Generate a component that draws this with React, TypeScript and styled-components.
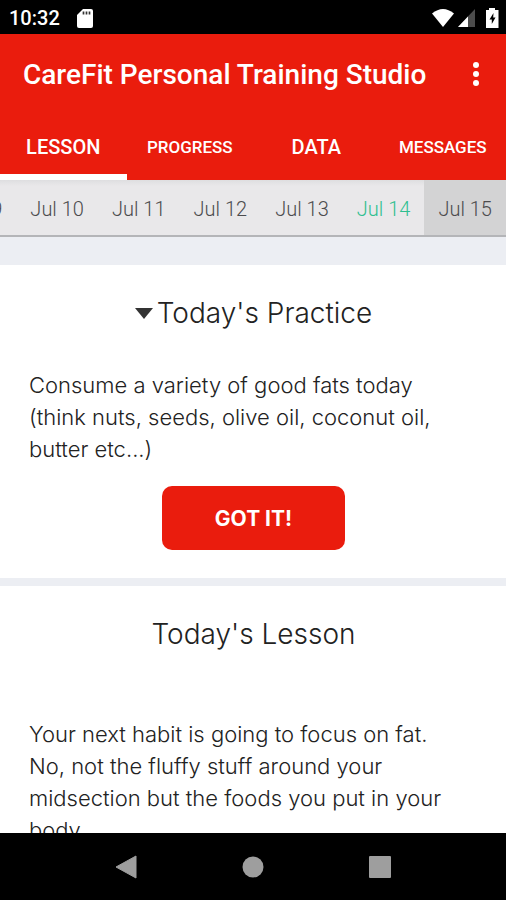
import React, { useState } from 'react';
import styled, { createGlobalStyle } from 'styled-components';

const red = '#ea1c0d';

const GlobalStyle = createGlobalStyle`
  * { box-sizing: border-box; }
  body { margin: 0; background: #000; }
  button { font: inherit; border: 0; padding: 0; margin: 0; background: none; cursor: pointer; }
`;

const Screen = styled.div`
  display: flex;
  flex-direction: column;
  height: 100vh;
  overflow: hidden;
  background: #fff;
  font-family: Roboto, sans-serif;
`;

const StatusBar = styled.div`
  display: flex;
  align-items: center;
  flex: none;
  height: 34px;
  padding: 2px 7px 0 9px;
  gap: 4px;
  background: #000;
  color: #fff;
  font-size: 20px;
  font-weight: 500;
`;

const Clock = styled.time`
  margin-right: 13px;
`;

const StatusIcons = styled.div`
  display: flex;
  align-items: center;
  gap: 4px;
  margin-left: auto;
`;

const Header = styled.header`
  flex: none;
  background: ${red};
  color: #fff;
`;

const TitleRow = styled.div`
  display: flex;
  align-items: center;
  justify-content: space-between;
  height: 80px;
  padding: 0 18px 0 23px;
`;

const AppTitle = styled.h1`
  margin: 0;
  font-size: 28px;
  font-weight: 500;
  white-space: nowrap;
`;

const MenuButton = styled.button`
  display: flex;
  align-items: center;
  justify-content: center;
  width: 24px;
  height: 40px;
`;

const Tabs = styled.nav`
  display: grid;
  grid-template-columns: repeat(4, 1fr);
  height: 66px;
`;

const Tab = styled.button<{ $active: boolean; $small?: boolean }>`
  border-top: 6px solid transparent;
  border-bottom: 6px solid ${(p) => (p.$active ? '#fff' : 'transparent')};
  color: #fff;
  font-size: ${(p) => (p.$small ? 17 : 20)}px;
  font-weight: 500;
`;

const Dates = styled.div`
  display: flex;
  flex: none;
  justify-content: flex-end;
  height: 57px;
  overflow: hidden;
  background: linear-gradient(#dedee0, #e9e8ea 6px);
  border-bottom: 2px solid #b4b5b8;
`;

const DateButton = styled.button<{ $today?: boolean; $selected: boolean }>`
  flex: 0 0 calc(100% / 6.2);
  padding-top: 3px;
  color: ${(p) => (p.$today ? '#2fbf90' : '#4c4c4e')};
  background: ${(p) => (p.$selected ? '#d3d3d4' : 'transparent')};
  font-size: 20px;
  font-weight: 300;
  white-space: nowrap;
`;

const Content = styled.main`
  flex: 1;
  min-height: 0;
  overflow: hidden;
  padding-top: 28px;
  background: #eceef3;
  color: #222;
  font-family: Inter, sans-serif;
`;

const Card = styled.section`
  display: flex;
  flex-direction: column;
  padding: 28px 28px 28px 29px;
  margin-bottom: 8px;
  background: #fff;
`;

const CardTitle = styled.h2`
  display: flex;
  align-items: center;
  justify-content: center;
  gap: 4px;
  margin: 0;
  font-size: 28px;
  line-height: 40px;
  font-weight: 300;
`;

const CardText = styled.p<{ $gap: number }>`
  margin: ${(p) => p.$gap}px 20px 21px 0;
  font-size: 22px;
  line-height: 32px;
  font-weight: 300;
`;

const Confirm = styled.button`
  align-self: center;
  width: 183px;
  height: 64px;
  border-radius: 10px;
  background: ${red};
  color: #fff;
  font-size: 21px;
  font-weight: 700;
`;

const NavBar = styled.nav`
  display: grid;
  grid-template-columns: repeat(3, 1fr);
  flex: none;
  height: 67px;
  padding: 0 63px;
  background: #000;
`;

const NavButton = styled.button`
  display: flex;
  align-items: center;
  justify-content: center;
`;

const tabs = [
  { name: 'LESSON' },
  { name: 'PROGRESS', small: true },
  { name: 'DATA' },
  { name: 'MESSAGES', small: true },
];

const dates = ['Jul 09', 'Jul 10', 'Jul 11', 'Jul 12', 'Jul 13', 'Jul 14', 'Jul 15'];
const today = 'Jul 14';

export default function App() {
  const [tab, setTab] = useState('LESSON');
  const [date, setDate] = useState('Jul 15');

  return (
    <Screen>
      <GlobalStyle />
      <StatusBar>
        <Clock>10:32</Clock>
        <svg width="16" height="19" viewBox="0 0 16 19" aria-hidden="true">
          <path d="M6 0h8q2 0 2 2v15q0 2-2 2H2q-2 0-2-2V6z" fill="#fff" />
          <path d="M6.5 2.5v3M9.5 2.5v3M12.5 2.5v3" stroke="#333" strokeWidth="1.7" />
        </svg>
        <StatusIcons>
          <svg width="22" height="18" viewBox="0 0 22 18" aria-hidden="true">
            <path d="M0 4.5Q11-4.5 22 4.5L11 18z" fill="#fff" />
          </svg>
          <svg width="17" height="18" viewBox="0 0 17 18" aria-hidden="true">
            <path d="M17 0v18H0z" fill="#4c4c4c" />
            <path d="M10 7.4V18H0z" fill="#fff" />
          </svg>
          <svg width="20" height="20" viewBox="-7 0 20 20" aria-hidden="true">
            <path d="M3 0h6v2h3.500v18H0V2h3z" fill="#fff" />
            <path d="M7.500 5L3.500 11.500h2.300V16L9.500 9.500H7.200z" fill="#000" />
          </svg>
        </StatusIcons>
      </StatusBar>
      <Header>
        <TitleRow>
          <AppTitle>CareFit Personal Training Studio</AppTitle>
          <MenuButton aria-label="More options">
            <svg width="6" height="24" viewBox="0 0 6 24" fill="#fff" aria-hidden="true">
              <circle cx="3" cy="3" r="3" />
              <circle cx="3" cy="12" r="3" />
              <circle cx="3" cy="21" r="3" />
            </svg>
          </MenuButton>
        </TitleRow>
        <Tabs>
          {tabs.map((t) => (
            <Tab key={t.name} $active={t.name === tab} $small={t.small} onClick={() => setTab(t.name)}>
              {t.name}
            </Tab>
          ))}
        </Tabs>
      </Header>
      <Dates>
        {dates.map((d) => (
          <DateButton key={d} $today={d === today} $selected={d === date} onClick={() => setDate(d)}>
            {d}
          </DateButton>
        ))}
      </Dates>
      <Content>
        <Card>
          <CardTitle>
            <svg width="18" height="11" viewBox="0 0 18 11" aria-hidden="true">
              <path d="M0 0h18L9 11z" fill="#333" />
            </svg>
            Today's Practice
          </CardTitle>
          <CardText $gap={36}>
            Consume a variety of good fats today (think nuts, seeds, olive oil, coconut oil, butter etc...)
          </CardText>
          <Confirm>GOT IT!</Confirm>
        </Card>
        <Card>
          <CardTitle>Today's Lesson</CardTitle>
          <CardText $gap={64}>
            Your next habit is going to focus on fat. No, not the fluffy stuff around your midsection but
            the foods you put in your body.
          </CardText>
        </Card>
      </Content>
      <NavBar>
        <NavButton aria-label="Back">
          <svg width="22" height="24" viewBox="0 0 22 24" aria-hidden="true">
            <path d="M21 1v22L1 12z" fill="#9e9e9e" stroke="#9e9e9e" strokeLinejoin="round" />
          </svg>
        </NavButton>
        <NavButton aria-label="Home">
          <svg width="22" height="22" viewBox="0 0 22 22" aria-hidden="true">
            <circle cx="11" cy="11" r="10.500" fill="#9e9e9e" />
          </svg>
        </NavButton>
        <NavButton aria-label="Recent apps">
          <svg width="22" height="22" viewBox="0 0 22 22" aria-hidden="true">
            <rect width="22" height="22" rx="1" fill="#9e9e9e" />
          </svg>
        </NavButton>
      </NavBar>
    </Screen>
  );
}
